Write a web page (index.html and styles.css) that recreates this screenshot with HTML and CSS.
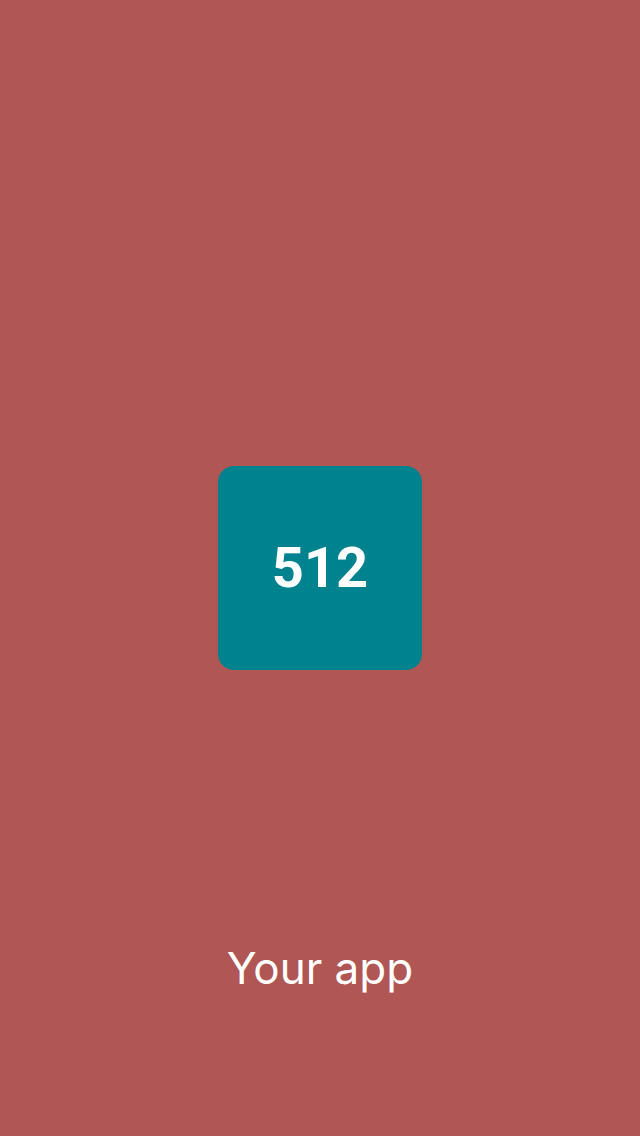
FILE: index.html
```html
<!DOCTYPE html>
<html lang="en">
<head>
<meta charset="utf-8">
<title>Your app</title>
<link rel="stylesheet" href="styles.css">
</head>
<body>
<main class="screen">
  <div class="top"></div>
  <div class="tile"><span class="tile-num">512</span></div>
  <div class="bottom"><p class="app-name">Your app</p></div>
</main>
</body>
</html>
```
FILE: styles.css
```css
html, body {
  margin: 0;
  padding: 0;
}
body {
  background: #b05654;
  font-family: Roboto, "Noto Sans", "Liberation Sans", sans-serif;
  color: #ffffff;
}
.screen {
  height: 1136px;
  display: grid;
  grid-template-rows: 1fr auto 1fr;
  justify-items: center;
}
.tile {
  width: 204px;
  height: 204px;
  border-radius: 16px;
  background: #00838f;
  display: flex;
  align-items: center;
  justify-content: center;
}
.tile-num {
  font-size: 56px;
  font-weight: 700;
  line-height: 1;
}
.bottom {
  align-self: start;
  padding-top: 275px;
}
.app-name {
  margin: 0;
  font-family: Inter, "Noto Sans", sans-serif;
  font-size: 44px;
  font-weight: 400;
  line-height: 47px;
}
```
